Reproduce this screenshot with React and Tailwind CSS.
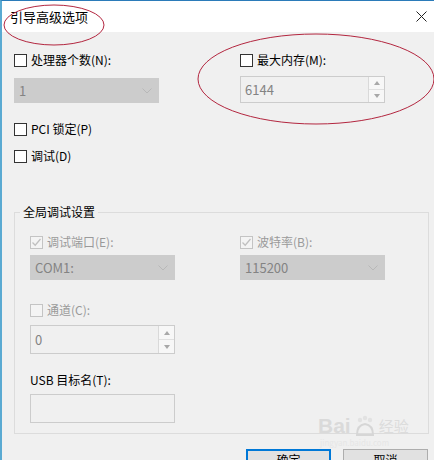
import React from "react";

const font = { fontFamily: '"Noto Sans CJK SC", "Microsoft YaHei", sans-serif' };

function Box({ checked, disabled }) {
  return (
    <span
      className={
        "relative flex w-[13px] h-[13px] shrink-0 border " +
        (disabled ? "border-[#c4c4c4] bg-[#f4f4f4]" : "border-[#333333] bg-white")
      }
    >
      {checked && (
        <svg width="11" height="11" viewBox="0 0 11 11" className="absolute left-0 top-0">
          <path d="M1.5 5.5 L4.2 8.2 L9.5 2" fill="none" stroke="#c0c0c0" strokeWidth="1.3" />
        </svg>
      )}
    </span>
  );
}

function Check({ label, checked, disabled }) {
  return (
    <div className="flex items-center gap-[4px] h-[14px]">
      <Box checked={checked} disabled={disabled} />
      <span className={"text-[12px] leading-[14px] " + (disabled ? "text-[#9a9a9a]" : "text-black")}>
        {label}
      </span>
    </div>
  );
}

function Combo({ value }) {
  return (
    <div className="flex items-center justify-between w-[145px] h-[25px] bg-[#cccccc] pl-[5px] pr-[7px]">
      <span className="text-[13px] text-[#838383]">{value}</span>
      <svg width="10" height="6" viewBox="0 0 10 6">
        <path d="M0.5 0.5 L5 5 L9.5 0.5" fill="none" stroke="#b8b8b8" strokeWidth="1" />
      </svg>
    </div>
  );
}

function Spin({ value, h = "h-[27px]" }) {
  return (
    <div className={"flex w-[145px] border border-[#cccccc] bg-[#f0f0f0] " + h}>
      <div className="flex-1 flex items-center pl-[4px] text-[13px] text-[#838383]">{value}</div>
      <div className="flex flex-col w-[16px] border-l border-[#d9d9d9]">
        <div className="flex-1 flex items-center justify-center border-b border-[#e0e0e0] bg-[#f7f7f7]">
          <svg width="6" height="4" viewBox="0 0 6 4"><path d="M0 4 L3 0 L6 4Z" fill="#a8a8a8" /></svg>
        </div>
        <div className="flex-1 flex items-center justify-center bg-[#f7f7f7]">
          <svg width="6" height="4" viewBox="0 0 6 4"><path d="M0 0 L3 4 L6 0Z" fill="#a8a8a8" /></svg>
        </div>
      </div>
    </div>
  );
}

export default function App() {
  return (
    <div
      className="relative w-[434px] h-[460px] overflow-hidden bg-[#f0f0f0] border-t border-t-[#2b7bb9] border-l-2 border-l-[#5aaad2]"
      style={font}
    >
      {/* title bar */}
      <div className="flex items-center justify-between h-[31px] bg-white pl-[8px] pr-[6px]">
        <span className="text-[13px] text-black">引导高级选项</span>
        <svg width="11" height="11" viewBox="0 0 11 11" className="mr-[1px]">
          <path d="M0.5 0.5 L10.5 10.5 M10.5 0.5 L0.5 10.5" stroke="#222" strokeWidth="1" />
        </svg>
      </div>

      <div className="pl-[12px] pt-[21px]">
        <div className="flex">
          <div className="w-[226px]">
            <Check label="处理器个数(N):" />
            <div className="mt-[11px]">
              <Combo value="1" />
            </div>
          </div>
          <div>
            <Check label="最大内存(M):" />
            <div className="mt-[9px]">
              <Spin value="6144" />
            </div>
          </div>
        </div>

        <div className="mt-[19px] flex flex-col gap-[13px]">
          <Check label="PCI  锁定(P)" />
          <Check label="调试(D)" />
        </div>

        <fieldset className="mt-[42px] w-[415px] h-[229px] border border-[#dcdcdc] pl-[15px]">
          <legend className="-ml-[10px] px-[3px] text-[12px] leading-[14px] text-black">全局调试设置</legend>
          <div className="flex mt-[16px]">
            <div className="w-[210px]">
              <Check label="调试端口(E):" checked disabled />
              <div className="mt-[6px]">
                <Combo value="COM1:" />
              </div>
            </div>
            <div>
              <Check label="波特率(B):" checked disabled />
              <div className="mt-[6px]">
                <Combo value="115200" />
              </div>
            </div>
          </div>
          <div className="mt-[23px]">
            <Check label="通道(C):" disabled />
            <div className="mt-[8px]">
              <Spin value="0" h="h-[29px]" />
            </div>
          </div>
          <div className="mt-[19px] text-[12px] leading-[14px] text-black">USB 目标名(T):</div>
          <div className="mt-[7px] w-[145px] h-[29px] border border-[#cccccc] bg-[#f0f0f0]" />
        </fieldset>

        <div className="flex justify-end gap-[12px] mt-[15px] pr-[6px]">
          <button className="w-[85px] h-[22px] border-2 border-[#0078d7] bg-[#e1e1e1] text-[12px] leading-[14px] text-black">确定</button>
          <button className="w-[85px] h-[22px] border border-[#adadad] bg-[#e1e1e1] text-[12px] leading-[14px] text-black">取消</button>
        </div>
      </div>

      {/* annotation ellipses */}
      <svg className="absolute left-0 top-0 pointer-events-none" width="434" height="460">
        <ellipse cx="52" cy="24" rx="50" ry="20" fill="none" stroke="#b3263f" strokeWidth="1" />
        <ellipse cx="314" cy="78" rx="118" ry="45" fill="none" stroke="#b3263f" strokeWidth="1" />
      </svg>

      {/* watermark */}
      <div className="absolute left-[316px] top-[414px] pointer-events-none flex items-center gap-[3px] text-[#dadada]">
        <span className="text-[21px] font-bold leading-[22px]" style={{ fontFamily: '"Liberation Sans", sans-serif' }}>Bai</span>
        <svg width="22" height="22" viewBox="0 0 22 22">
          <circle cx="6" cy="5" r="2.2" fill="#e2e2e2" />
          <circle cx="11" cy="3" r="2.2" fill="#e2e2e2" />
          <circle cx="16" cy="5" r="2.2" fill="#e2e2e2" />
          <path d="M3 20 Q3 10 11 9 Q19 10 19 20 Z" fill="none" stroke="#d6d6d6" strokeWidth="2" />
        </svg>
        <span className="text-[15px] leading-[22px] text-[#dcdcdc]">经验</span>
      </div>
      <div className="absolute left-[318px] top-[437px] text-[8px] leading-[9px] text-[#e6e6e6] pointer-events-none">jingyan.baidu.com</div>
    </div>
  );
}
